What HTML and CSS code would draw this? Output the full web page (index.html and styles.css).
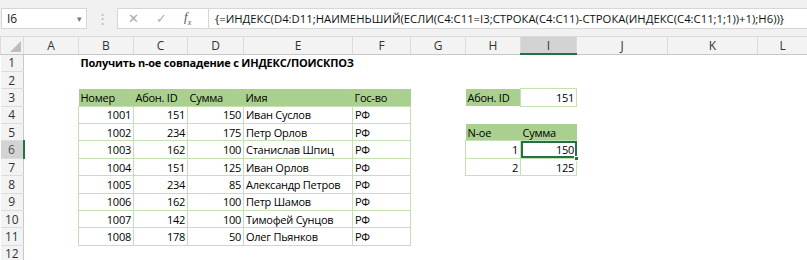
FILE: index.html
```html
<!DOCTYPE html>
<html lang="ru">
<head>
    <meta charset="UTF-8">
    <title>ИНДЕКС/ПОИСКПОЗ</title>
    <link rel="stylesheet" href="styles.css">
</head>
<body>
    <div class="fbar">
        <div class="namebox">I6<span class="drop">▾</span></div>
        <div class="dots">⋮</div>
        <div class="fxbox">
            <span class="cancel">✕</span>
            <span class="enter">✓</span>
            <span class="fx">f<sub>x</sub></span>
        </div>
        <div class="formula">{=ИНДЕКС(D4:D11;НАИМЕНЬШИЙ(ЕСЛИ(C4:C11=I3;СТРОКА(C4:C11)-СТРОКА(ИНДЕКС(C4:C11;1;1))+1);H6))}</div>
    </div>

    <table class="sheet">
        <colgroup>
            <col class="w-hdr">
            <col class="w55"><col class="w55"><col class="w54"><col class="w56">
            <col class="w109"><col class="w58"><col class="w55"><col class="w55">
            <col class="w56"><col class="w91"><col class="w90"><col class="w50">
        </colgroup>
        <tr class="colhdr">
            <td class="corner"><span class="tri"></span></td>
            <td>A</td><td>B</td><td>C</td><td>D</td><td>E</td><td>F</td>
            <td>G</td><td>H</td><td class="sel">I</td><td>J</td><td>K</td><td>L</td>
        </tr>
        <tr>
            <td class="rh">1</td><td></td>
            <td class="title">Получить n-ое совпадение с ИНДЕКС/ПОИСКПОЗ</td>
            <td></td><td></td><td></td><td></td><td></td><td></td><td></td><td></td><td></td><td></td>
        </tr>
        <tr>
            <td class="rh">2</td><td></td><td></td><td></td><td></td><td></td><td></td><td></td><td></td><td></td><td></td><td></td><td></td>
        </tr>
        <tr>
            <td class="rh">3</td><td></td>
            <td class="th">Номер</td><td class="th">Абон. ID</td><td class="th">Сумма</td><td class="th">Имя</td><td class="th">Гос-во</td>
            <td></td>
            <td class="th">Абон. ID</td><td class="tb num">151</td>
            <td></td><td></td><td></td>
        </tr>
        <tr>
            <td class="rh">4</td><td></td>
            <td class="tb num">1001</td><td class="tb num">151</td><td class="tb num">150</td><td class="tb">Иван Суслов</td><td class="tb">РФ</td>
            <td></td><td></td><td></td><td></td><td></td><td></td>
        </tr>
        <tr>
            <td class="rh">5</td><td></td>
            <td class="tb num">1002</td><td class="tb num">234</td><td class="tb num">175</td><td class="tb">Петр Орлов</td><td class="tb">РФ</td>
            <td></td>
            <td class="th">N-ое</td><td class="th">Сумма</td>
            <td></td><td></td><td></td>
        </tr>
        <tr>
            <td class="rh rsel">6</td><td></td>
            <td class="tb num">1003</td><td class="tb num">162</td><td class="tb num">100</td><td class="tb">Станислав Шпиц</td><td class="tb">РФ</td>
            <td></td>
            <td class="tb num">1</td><td class="tb num active">150</td>
            <td></td><td></td><td></td>
        </tr>
        <tr>
            <td class="rh">7</td><td></td>
            <td class="tb num">1004</td><td class="tb num">151</td><td class="tb num">125</td><td class="tb">Иван Орлов</td><td class="tb">РФ</td>
            <td></td>
            <td class="tb num">2</td><td class="tb num">125</td>
            <td></td><td></td><td></td>
        </tr>
        <tr>
            <td class="rh">8</td><td></td>
            <td class="tb num">1005</td><td class="tb num">234</td><td class="tb num">85</td><td class="tb">Александр Петров</td><td class="tb">РФ</td>
            <td></td><td></td><td></td><td></td><td></td><td></td>
        </tr>
        <tr>
            <td class="rh">9</td><td></td>
            <td class="tb num">1006</td><td class="tb num">162</td><td class="tb num">100</td><td class="tb">Петр Шамов</td><td class="tb">РФ</td>
            <td></td><td></td><td></td><td></td><td></td><td></td>
        </tr>
        <tr>
            <td class="rh">10</td><td></td>
            <td class="tb num">1007</td><td class="tb num">142</td><td class="tb num">100</td><td class="tb">Тимофей Сунцов</td><td class="tb">РФ</td>
            <td></td><td></td><td></td><td></td><td></td><td></td>
        </tr>
        <tr>
            <td class="rh">11</td><td></td>
            <td class="tb num">1008</td><td class="tb num">178</td><td class="tb num">50</td><td class="tb">Олег Пьянков</td><td class="tb">РФ</td>
            <td></td><td></td><td></td><td></td><td></td><td></td>
        </tr>
        <tr>
            <td class="rh">12</td><td></td><td></td><td></td><td></td><td></td><td></td><td></td><td></td><td></td><td></td><td></td><td></td>
        </tr>
    </table>
</body>
</html>
```

FILE: styles.css
```css
body {
    margin: 0;
    background: #fff;
    font-family: "Open Sans", "Noto Sans", sans-serif;
    color: #000;
    overflow: hidden;
}

/* formula bar */
.fbar {
    height: 37px;
    background: #f1f1f1;
    display: flex;
    align-items: center;
    border-bottom: 1px solid #dadada;
    box-sizing: border-box;
}

.namebox {
    width: 86px;
    height: 21px;
    margin-left: 1px;
    background: #fff;
    border: 1px solid #d6d6d6;
    box-sizing: border-box;
    font-size: 12px;
    line-height: 19px;
    padding-left: 5px;
    position: relative;
    color: #222;
}

.drop {
    position: absolute;
    right: 4px;
    top: 0;
    font-size: 9px;
    color: #777;
}

.dots {
    width: 30px;
    text-align: center;
    color: #b5b5b5;
    font-size: 13px;
}

.fxbox {
    width: 91px;
    height: 21px;
    background: #fff;
    border: 1px solid #d6d6d6;
    border-right: none;
    box-sizing: border-box;
    display: flex;
    align-items: center;
}

.cancel {
    margin-left: 10px;
    color: #a8a8a8;
    font-size: 13px;
}

.enter {
    margin-left: 17px;
    color: #b0b0b0;
    font-size: 13px;
}

.fx {
    margin-left: 17px;
    font-family: "Liberation Serif", serif;
    font-style: italic;
    font-size: 13px;
    color: #555;
}

.fx sub {
    font-size: 8px;
}

.formula {
    flex: 1;
    height: 21px;
    background: #fff;
    border: 1px solid #d6d6d6;
    border-right: none;
    box-sizing: border-box;
    font-size: 11.3px;
    line-height: 19px;
    padding-left: 6px;
    white-space: nowrap;
    overflow: hidden;
    color: #111;
}

/* sheet */
.sheet {
    border-collapse: collapse;
    table-layout: fixed;
    width: 807px;
    font-size: 11px;
    letter-spacing: -0.25px;
}

.w-hdr { width: 23px; }
.w50 { width: 50px; }
.w54 { width: 54px; }
.w55 { width: 55px; }
.w56 { width: 56px; }
.w58 { width: 58px; }
.w90 { width: 90px; }
.w91 { width: 91px; }
.w109 { width: 109px; }

.sheet td {
    height: 17.4px;
    padding: 0 2px;
    box-sizing: border-box;
    white-space: nowrap;
    line-height: 15px;
}

.colhdr td {
    height: 17px;
    background: #f3f3f3;
    text-align: center;
    color: #333;
    border-left: 1px solid #dcdcdc;
    border-bottom: 1px solid #c8c8c8;
    font-size: 12px;
    letter-spacing: 0;
}

.colhdr td.sel {
    background: #d3d3d3;
    border-bottom: 2px solid #217346;
}

.corner {
    position: relative;
}

.tri {
    position: absolute;
    right: 2px;
    bottom: 2px;
    width: 0;
    height: 0;
    border-left: 11px solid transparent;
    border-bottom: 11px solid #bdbdbd;
}

.sheet td.rh {
    background: #f3f3f3;
    text-align: center;
    color: #333;
    border-right: 1px solid #c8c8c8;
    border-bottom: 1px solid #dcdcdc;
    padding: 0;
    font-size: 12px;
    letter-spacing: 0;
}

.sheet td.rsel {
    background: #d3d3d3;
    color: #555;
    border-right: 2px solid #217346;
}

.title {
    font-weight: bold;
    letter-spacing: -0.2px;
    overflow: visible;
}

.th {
    background: #a9d08e;
}

.tb {
    border: 1px solid #c6e0b4;
}

.num {
    text-align: right;
}

.active {
    position: relative;
    outline: 2px solid #217346;
    outline-offset: -2px;
}

.active::after {
    content: "";
    position: absolute;
    right: -3px;
    bottom: -3px;
    width: 5px;
    height: 5px;
    background: #217346;
    border: 1px solid #fff;
    box-sizing: border-box;
}
```
